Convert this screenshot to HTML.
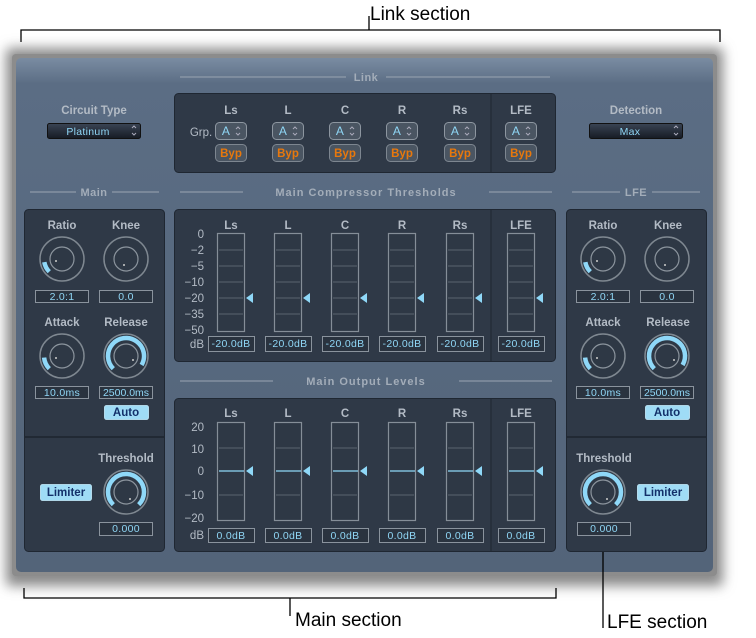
<!DOCTYPE html>
<html><head><meta charset="utf-8"><style>
html,body{margin:0;padding:0;background:#fff;width:756px;height:638px;overflow:hidden}
svg{display:block}
.l{font-family:"Liberation Sans",sans-serif;font-weight:bold;font-size:11.5px;fill:#b3bbc5;text-anchor:middle}
.h{font-family:"Liberation Sans",sans-serif;font-weight:bold;font-size:11px;fill:#a3adb9;text-anchor:middle;letter-spacing:.5px}
.v{font-family:"Liberation Sans",sans-serif;font-size:10.5px;fill:#8fd6f5;text-anchor:middle;letter-spacing:.3px}
.s{font-family:"Liberation Sans",sans-serif;font-size:11.5px;fill:#b3bbc5;text-anchor:end}
.c{font-family:"Liberation Sans",sans-serif;font-size:19px;fill:#000}
.box{fill:#2f3947;stroke:#1f2732;stroke-width:1}
.vb{fill:#2a333f;stroke:#8a939d;stroke-width:1}
.m{fill:#2e3845;stroke:#858e98;stroke-width:1.2}
.g{stroke:#5a6470;stroke-width:1}
.hl{stroke:#9aa5b2;stroke-width:1}
.ko{fill:#2e3845;stroke:#7f8891;stroke-width:1.5}
.ki{fill:none;stroke:#8c959e;stroke-width:1.2}
.arc{fill:none;stroke:#8fd8f8;stroke-width:4.5}
.bt{fill:#9fdcf6;stroke:#c7efff;stroke-width:.8}
.bx{font-family:"Liberation Sans",sans-serif;font-weight:bold;font-size:11.5px;fill:#13306a;text-anchor:middle}
.sel{fill:#4a5562;stroke:#8d96a0;stroke-width:1}
.byp{font-family:"Liberation Sans",sans-serif;font-weight:bold;font-size:11.5px;fill:#e8780c;text-anchor:middle}
.tri{fill:#8fd8f8}
</style></head><body>
<svg width="756" height="638" viewBox="0 0 756 638">
<defs>
<linearGradient id="pn" x1="0" y1="0" x2="0" y2="1"><stop offset="0" stop-color="#7a8ca2"/><stop offset=".05" stop-color="#5b6d84"/><stop offset="1" stop-color="#536479"/></linearGradient>
<linearGradient id="pop" x1="0" y1="0" x2="0" y2="1"><stop offset="0" stop-color="#3a4454"/><stop offset="1" stop-color="#161b24"/></linearGradient>
<filter id="bl" x="-10%" y="-10%" width="120%" height="120%"><feGaussianBlur stdDeviation="6"/></filter>
</defs>
<text x="370" y="20" class="c">Link section</text>
<path d="M21 42V30H720V42M369 30V16" fill="none" stroke="#000" stroke-width="1.3"/>
<rect x="6" y="48" width="717" height="538" rx="4" fill="#8a8a8a" filter="url(#bl)"/>
<rect x="12" y="54" width="705" height="522" rx="4" fill="#8c8c8c"/>
<rect x="16" y="58" width="697" height="514" rx="5" fill="url(#pn)"/>
<line x1="180" y1="77" x2="346" y2="77" class="hl"/><line x1="386" y1="77" x2="550" y2="77" class="hl"/>
<text x="366" y="81" class="h">Link</text>
<line x1="30" y1="192" x2="76" y2="192" class="hl"/><line x1="112" y1="192" x2="159" y2="192" class="hl"/>
<text x="94" y="196" class="h">Main</text>
<line x1="180" y1="192" x2="243" y2="192" class="hl"/><line x1="489" y1="192" x2="552" y2="192" class="hl"/>
<text x="366" y="196" class="h" style="letter-spacing:1px">Main Compressor Thresholds</text>
<line x1="572" y1="192" x2="620" y2="192" class="hl"/><line x1="652" y1="192" x2="700" y2="192" class="hl"/>
<text x="636" y="196" class="h">LFE</text>
<line x1="180" y1="381" x2="273" y2="381" class="hl"/><line x1="459" y1="381" x2="552" y2="381" class="hl"/>
<text x="366" y="385" class="h" style="letter-spacing:1px">Main Output Levels</text>
<text x="94" y="114" class="l">Circuit Type</text>
<rect x="47.5" y="123.5" width="93" height="15" rx="2" fill="url(#pop)" stroke="#111"/>
<text x="88" y="135" class="v">Platinum</text>
<path d="M132 128l2-2 2 2M132 133l2 2 2-2" stroke="#aab" fill="none"/>
<text x="636" y="114" class="l">Detection</text>
<rect x="589.5" y="123.5" width="93" height="15" rx="2" fill="url(#pop)" stroke="#111"/>
<text x="630" y="135" class="v">Max</text>
<path d="M674 128l2-2 2 2M674 133l2 2 2-2" stroke="#aab" fill="none"/>
<rect x="174.5" y="93.5" width="381" height="79" rx="4" class="box"/>
<line x1="491" y1="94" x2="491" y2="172" stroke="#1f2732"/>
<text x="201" y="136" class="l" style="font-weight:normal">Grp.</text>
<g id="lk">
<rect x="215.5" y="122.5" width="31" height="17" rx="4" class="sel"/>
<text x="226" y="135" class="v" style="font-size:12px">A</text>
<path d="M236 129l2-2 2 2M236 133l2 2 2-2" stroke="#aab" fill="none"/>
<rect x="215.5" y="144.5" width="31" height="17" rx="4" fill="#4a5562" stroke="#7d8690"/>
<text x="231" y="157" class="byp">Byp</text>
</g>
<use href="#lk" x="57"/><use href="#lk" x="114"/><use href="#lk" x="171"/><use href="#lk" x="229"/><use href="#lk" x="290"/>
<g class="l"><text x="231" y="114">Ls</text><text x="288" y="114">L</text><text x="345" y="114">C</text><text x="402" y="114">R</text><text x="460" y="114">Rs</text><text x="521" y="114">LFE</text></g>
<rect x="174.5" y="209.5" width="381" height="152" rx="4" class="box"/>
<line x1="491" y1="210" x2="491" y2="361" stroke="#1f2732"/>
<g class="l"><text x="231" y="229">Ls</text><text x="288" y="229">L</text><text x="345" y="229">C</text><text x="402" y="229">R</text><text x="460" y="229">Rs</text><text x="521" y="229">LFE</text></g>
<g class="s"><text x="204" y="238">0</text><text x="204" y="254">−2</text><text x="204" y="270">−5</text><text x="204" y="286">−10</text><text x="204" y="302">−20</text><text x="204" y="318">−35</text><text x="204" y="334">−50</text><text x="204" y="348">dB</text></g>
<g id="cm">
<rect x="217.5" y="233.5" width="27" height="98" class="m"/>
<path d="M219 250H243M219 266H243M219 282H243M219 298H243M219 314H243" class="g"/>
<path d="M246 298l7-5v10z" class="tri"/>
<rect x="208.5" y="336.5" width="46" height="15" class="vb"/>
<text x="231" y="347" class="v">-20.0dB</text>
</g>
<use href="#cm" x="57"/><use href="#cm" x="114"/><use href="#cm" x="171"/><use href="#cm" x="229"/><use href="#cm" x="290"/>
<rect x="174.5" y="398.5" width="381" height="153" rx="4" class="box"/>
<line x1="491" y1="399" x2="491" y2="551" stroke="#1f2732"/>
<g class="l"><text x="231" y="417">Ls</text><text x="288" y="417">L</text><text x="345" y="417">C</text><text x="402" y="417">R</text><text x="460" y="417">Rs</text><text x="521" y="417">LFE</text></g>
<g class="s"><text x="204" y="431">20</text><text x="204" y="453">10</text><text x="204" y="475">0</text><text x="204" y="499">−10</text><text x="204" y="522">−20</text><text x="204" y="539">dB</text></g>
<g id="om">
<rect x="217.5" y="422.5" width="27" height="98" class="m"/>
<path d="M219 448H243M219 495H243" class="g"/>
<path d="M219 471H244" stroke="#8fd8f8" stroke-width="1.2"/>
<path d="M246 471l7-5v10z" class="tri"/>
<rect x="208.5" y="528.5" width="46" height="14" class="vb"/>
<text x="231" y="539" class="v">0.0dB</text>
</g>
<use href="#om" x="57"/><use href="#om" x="114"/><use href="#om" x="171"/><use href="#om" x="229"/><use href="#om" x="290"/>
<rect x="24.5" y="209.5" width="140" height="342" rx="4" class="box"/>
<line x1="25" y1="437" x2="164" y2="437" stroke="#1d242e" stroke-width="1.5"/>
<text x="62" y="229" class="l">Ratio</text><text x="126" y="229" class="l">Knee</text>
<text x="62" y="326" class="l">Attack</text><text x="126" y="326" class="l">Release</text>
<text x="126" y="462" class="l">Threshold</text>
<rect x="566.5" y="209.5" width="140" height="342" rx="4" class="box"/>
<line x1="567" y1="437" x2="706" y2="437" stroke="#1d242e" stroke-width="1.5"/>
<text x="603" y="229" class="l">Ratio</text><text x="668" y="229" class="l">Knee</text>
<text x="603" y="326" class="l">Attack</text><text x="668" y="326" class="l">Release</text>
<text x="604" y="462" class="l">Threshold</text>
<g id="kmain">
<circle cx="62" cy="259" r="22" class="ko"/><circle cx="62" cy="259" r="12" class="ki"/><circle cx="56" cy="261" r="1" fill="#ccc"/>
<path d="M49.3 271.7A18 18 0 0 1 44.3 262.1" class="arc"/>
<rect x="35.5" y="290.5" width="53" height="12" class="vb"/><text x="62" y="300" class="v">2.0:1</text>
<circle cx="126" cy="259" r="22" class="ko"/><circle cx="126" cy="259" r="12" class="ki"/><circle cx="124" cy="265" r="1" fill="#ccc"/>
<rect x="99.5" y="290.5" width="53" height="12" class="vb"/><text x="126" y="300" class="v">0.0</text>
<circle cx="62" cy="356" r="22" class="ko"/><circle cx="62" cy="356" r="12" class="ki"/><circle cx="56" cy="358" r="1" fill="#ccc"/>
<path d="M49.3 368.7A18 18 0 0 1 44.1 357.6" class="arc"/>
<rect x="35.5" y="386.5" width="53" height="12" class="vb"/><text x="62" y="396" class="v">10.0ms</text>
<circle cx="126" cy="356" r="22" class="ko"/><circle cx="126" cy="356" r="12" class="ki"/><circle cx="133" cy="360" r="1" fill="#ccc"/>
<path d="M113.3 368.7A18 18 0 1 1 141.6 365" class="arc"/>
<rect x="99.5" y="386.5" width="53" height="12" class="vb"/><text x="126" y="396" class="v" style="letter-spacing:0">2500.0ms</text>
<rect x="104.5" y="405.5" width="44" height="14" rx="2" class="bt"/><text x="126" y="416" class="bx">Auto</text>
</g>
<use href="#kmain" x="541"/>
<circle cx="126" cy="492" r="22" class="ko"/><circle cx="126" cy="492" r="12" class="ki"/><circle cx="130" cy="499" r="1" fill="#ccc"/>
<path d="M113.3 504.7A18 18 0 1 1 138.7 504.7" class="arc"/>
<rect x="99.5" y="522.5" width="53" height="13" class="vb"/><text x="126" y="532" class="v">0.000</text>
<rect x="40.5" y="484.5" width="51" height="16" rx="2" class="bt"/><text x="66" y="496" class="bx">Limiter</text>
<circle cx="603" cy="492" r="22" class="ko"/><circle cx="603" cy="492" r="12" class="ki"/><circle cx="607" cy="499" r="1" fill="#ccc"/>
<path d="M590.3 504.7A18 18 0 1 1 615.7 504.7" class="arc"/>
<rect x="577.5" y="522.5" width="53" height="13" class="vb"/><text x="604" y="532" class="v">0.000</text>
<rect x="637.5" y="484.5" width="51" height="16" rx="2" class="bt"/><text x="663" y="496" class="bx">Limiter</text>
<path d="M24 588V598H556V588M290 598V616" fill="none" stroke="#000" stroke-width="1.3"/>
<text x="295" y="626" class="c">Main section</text>
<path d="M603 552V628" stroke="#000" stroke-width="1.3"/>
<text x="607" y="628" class="c">LFE section</text>
</svg>
</body></html>
